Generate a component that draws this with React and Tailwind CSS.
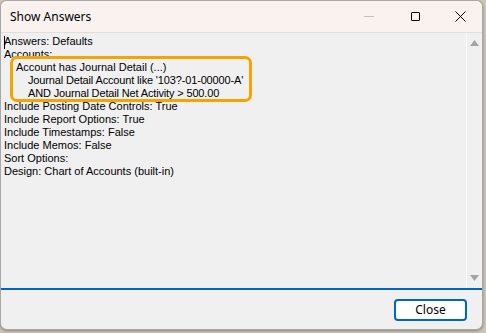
export default function App() {
  const lines = [
    { t: "Answers: Defaults", i: 0 },
    { t: "Accounts:", i: 0 },
    { t: "Account has Journal Detail (...)", i: 1 },
    { t: "Journal Detail Account like '103?-01-00000-A'", i: 2 },
    { t: "AND Journal Detail Net Activity > 500.00", i: 2 },
    { t: "Include Posting Date Controls: True", i: 0 },
    { t: "Include Report Options: True", i: 0 },
    { t: "Include Timestamps: False", i: 0 },
    { t: "Include Memos: False", i: 0 },
    { t: "Sort Options:", i: 0 },
    { t: "Design: Chart of Accounts (built-in)", i: 0 },
  ];
  return (
    <div className="w-[486px] h-[333px] bg-[#cdc6b4] overflow-hidden">
      <div className="relative w-[483px] h-[330px] rounded-[7px] border border-[#a8a8a8] bg-[#f0f0f0] flex flex-col overflow-hidden shadow-[0_1px_3px_rgba(0,0,0,0.35)]">
        {/* Title bar */}
        <div className="h-[32px] shrink-0 bg-[#faf2ef] border-b border-[#e2dedb] flex items-center">
          <div className="pl-[9px] text-[12px] text-black font-['Noto_Sans',sans-serif]">Show Answers</div>
          <div className="ml-auto flex h-full">
            <div className="w-[46px] h-full flex items-center justify-center">
              <div className="w-[10px] h-px bg-[#c4bebb]" />
            </div>
            <div className="w-[46px] h-full flex items-center justify-center">
              <div className="w-[9px] h-[9px] border border-black rounded-[1px]" />
            </div>
            <div className="w-[44px] h-full flex items-center justify-center">
              <svg width="11" height="11" viewBox="0 0 11 11">
                <path d="M0.5 0.5 L10.5 10.5 M10.5 0.5 L0.5 10.5" stroke="#000" strokeWidth="1" />
              </svg>
            </div>
          </div>
        </div>
        {/* Content */}
        <div className="flex-1 flex min-h-0">
          <div className="relative flex-1 pl-[3px] pt-[2px] font-['Liberation_Sans',Arial,sans-serif] text-[11px] leading-[13px] text-black">
            <div className="absolute left-[3px] top-[3px] w-px h-[13px] bg-black" />
            {lines.map((l, k) => (
              <div
                key={k}
                className={
                  l.i === 0
                    ? "whitespace-pre"
                    : l.i === 1
                    ? "whitespace-pre pl-[12px]"
                    : "whitespace-pre pl-[24px] tracking-[-0.15px]"
                }
              >
                {l.t}
              </div>
            ))}
          </div>
          <div className="w-[16px] border-l border-[#fafafa] bg-[#f0f0f0] flex flex-col items-center justify-between py-[7px]">
            <svg width="9" height="6" viewBox="0 0 9 6"><path d="M4.5 0 L9 6 L0 6 Z" fill="#a3a3a3" /></svg>
            <svg width="9" height="6" viewBox="0 0 9 6"><path d="M0 0 L9 0 L4.5 6 Z" fill="#a3a3a3" /></svg>
          </div>
        </div>
        <div className="h-[2px] shrink-0 bg-[#0067c0]" />
        {/* Footer */}
        <div className="h-[39px] shrink-0 flex justify-end items-start pt-[9px] pr-[15px]">
          <div className="w-[73px] h-[22px] rounded-[4px] border-2 border-[#0067c0] bg-white flex items-center justify-center text-[12px] text-black font-['Noto_Sans',sans-serif]">
            Close
          </div>
        </div>
        {/* Orange annotation */}
        <div className="absolute left-[9px] top-[55px] w-[242px] h-[46px] rounded-[7px] border-[3px] border-[#f5a500] pointer-events-none" />
      </div>
    </div>
  );
}
